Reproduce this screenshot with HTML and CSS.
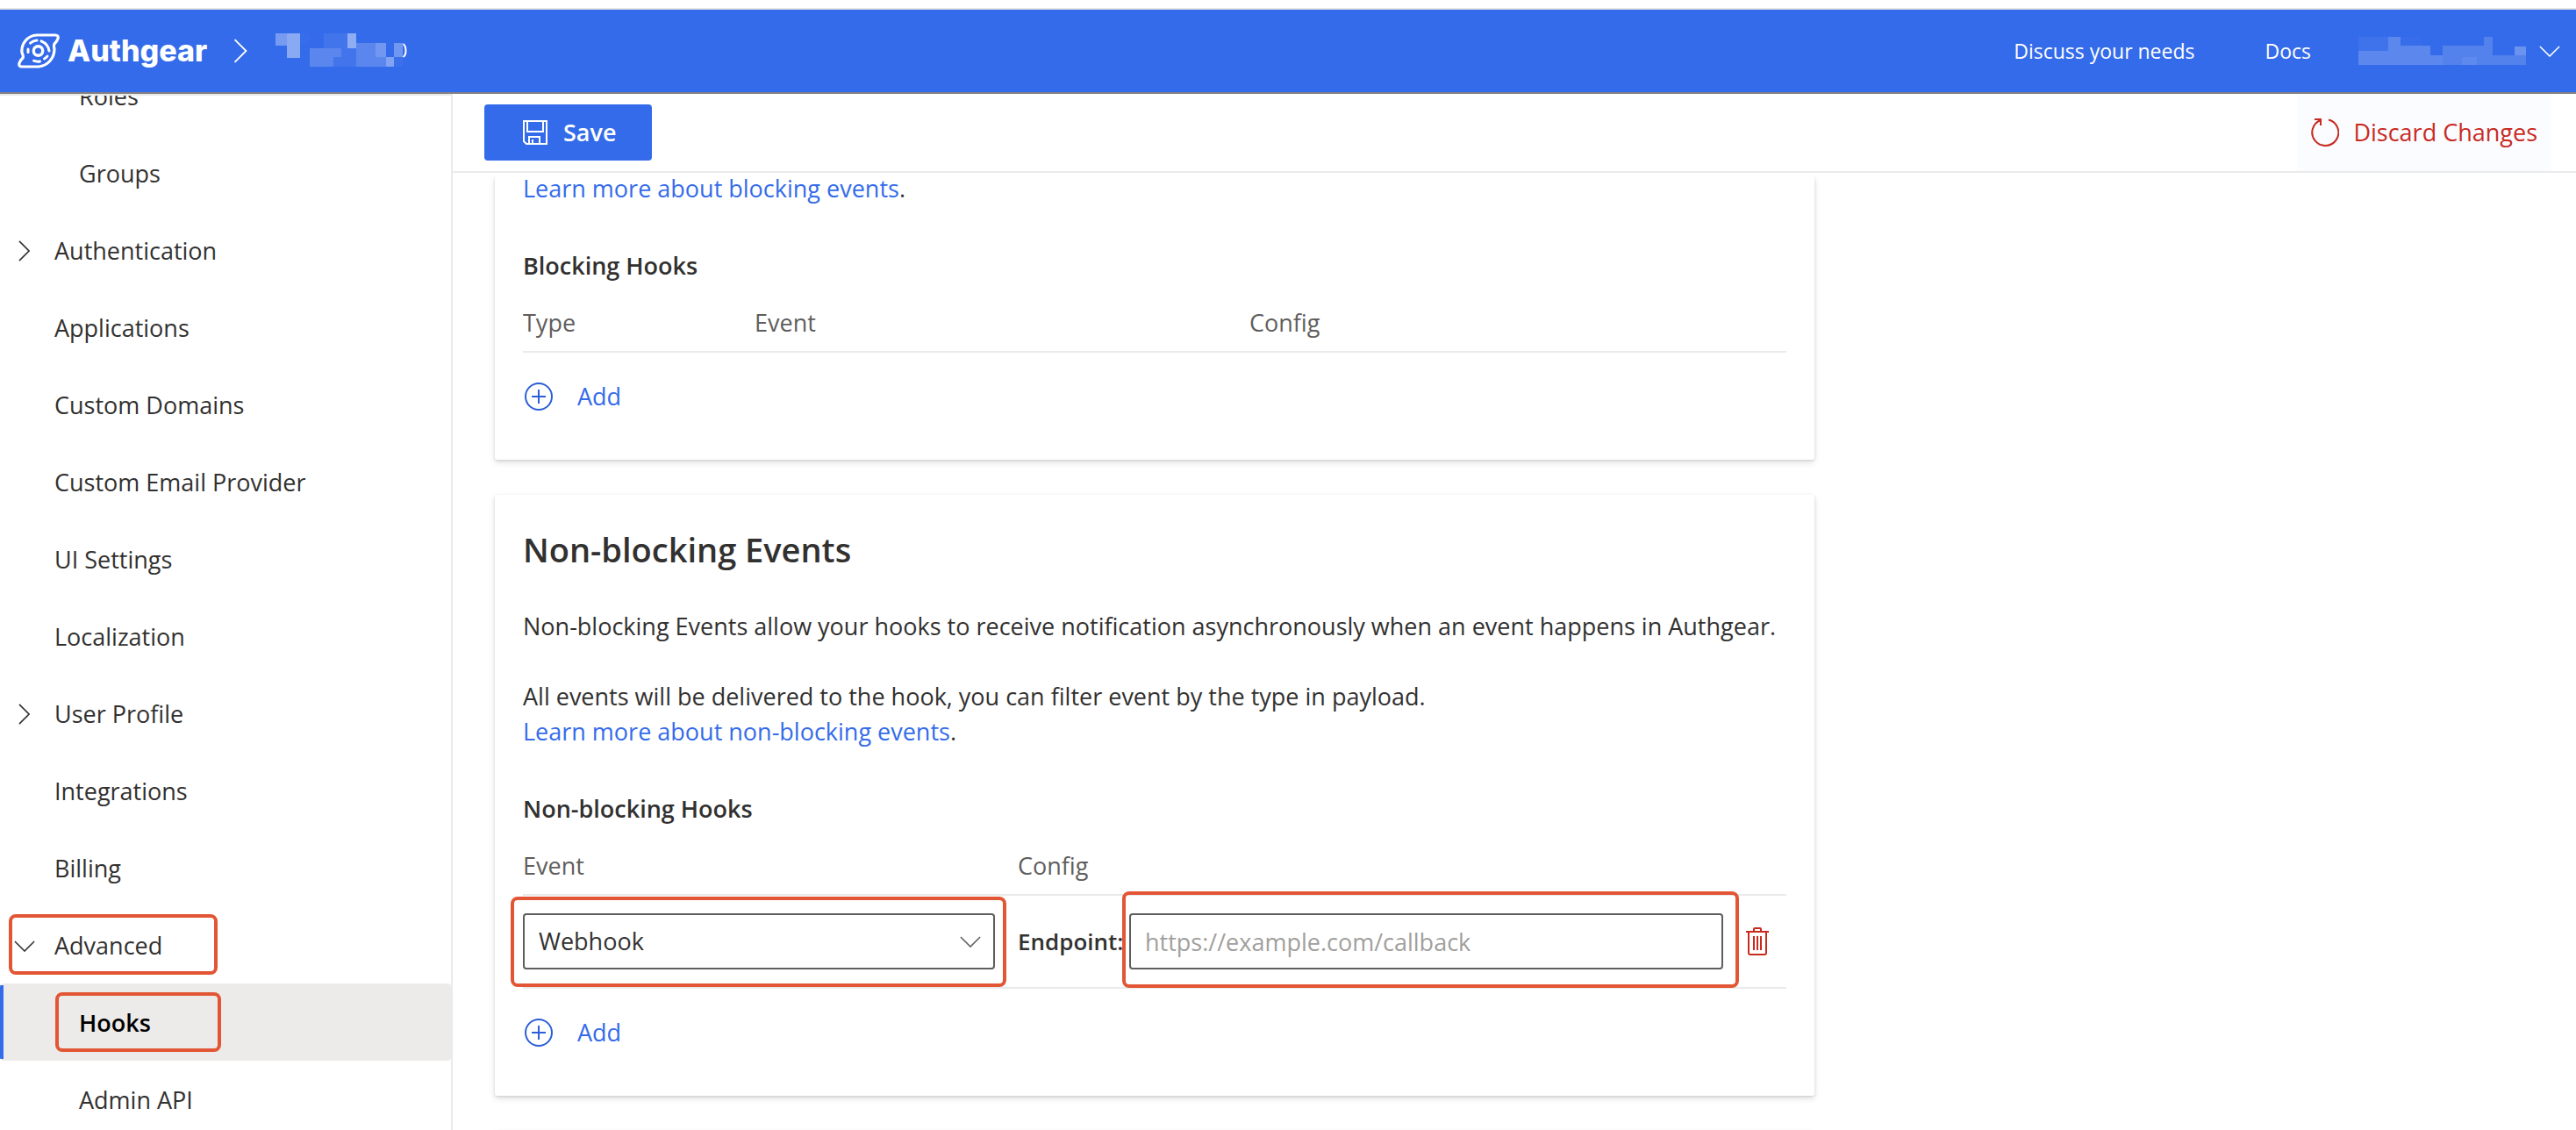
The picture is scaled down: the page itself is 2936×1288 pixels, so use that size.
FILE: index.html
```
<!DOCTYPE html>
<html lang="en">
<head>
<meta charset="utf-8">
<title>Hooks - Authgear</title>
<link rel="stylesheet" href="styles.css">
</head>
<body>
<svg class="defs" aria-hidden="true">
  <symbol id="chevron-right" viewBox="0 0 14 26"><path d="M1 1L13 13L1 25" fill="none" stroke="currentColor" stroke-width="1.700"/></symbol>
  <symbol id="chevron-down" viewBox="0 0 26 14"><path d="M1 1L13 13L25 1" fill="none" stroke="currentColor" stroke-width="1.700"/></symbol>
  <symbol id="circle-plus" viewBox="0 0 32 32"><g fill="none" stroke="currentColor" stroke-width="2"><circle cx="16" cy="16" r="15"/><path d="M16 8V24M8 16H24"/></g></symbol>
</svg>

<header class="topbar">
  <a class="logo" href="#">
    <svg class="logo-mark" viewBox="0 0 48 40" aria-hidden="true" fill="none" stroke="#fff" stroke-linecap="round" stroke-linejoin="round">
      <path stroke-width="3.2" d="M22 2H43Q47 2 46 6Q45 9 42 12Q41 14 42 18A20 20 0 0 1 24 38H5Q1 38 2 34Q3 31 6 28Q7 26 5 22A18 18 0 0 1 22 2Z"/>
      <circle cx="23.500" cy="20" r="5.200" stroke-width="3.400"/>
      <g stroke-width="3"><path d="M14.600 11.200Q18 8.200 22 8"/><path d="M27 8.800Q35 12 36 20"/><path d="M12 18V21.500"/><path d="M18.500 31.200Q22 32.600 25.500 32"/><path d="M30.500 29Q33 27.500 34 26"/></g>
    </svg>
    <span class="logo-text">Authgear</span>
  </a>
  <svg class="crumb-chevron" aria-hidden="true"><use href="#chevron-right"/></svg>
  <svg class="project" viewBox="0 0 150 40" aria-hidden="true" fill="#fff" shape-rendering="crispEdges">
    <path opacity=".33" d="M0 0h13v14H0z"/><path opacity=".42" d="M13 0h15v28H13z"/><path opacity=".02" d="M28 0h11v12H28z"/>
    <path opacity=".07" d="M55 0h27v17H55zM75 17h17v21H66V27h9z"/><path opacity=".45" d="M82 0h10v17H82z"/>
    <path opacity=".19" d="M39 17h36v10h-9v11H39zM92 11h22v16h12v11H92z"/><path opacity=".3" d="M114 11h12v16h-12zM135 11h10v16h-10z"/>
    <path opacity=".38" d="M126 27h9v11h-9z"/><path opacity=".04" d="M135 27h10v11h-10z"/>
    <path d="M145.500 12Q148.500 14 148.500 20Q148.500 25 145.500 27" fill="none" stroke="#fff" stroke-width="2" shape-rendering="auto"/>
  </svg>
  <nav class="top-links">
    <a href="#">Discuss your needs</a>
    <a href="#">Docs</a>
    <button class="account" type="button" aria-label="Account menu">
      <svg class="account-name" viewBox="0 0 191 32" aria-hidden="true" fill="#fff" shape-rendering="crispEdges">
        <path opacity=".06" d="M0 0h34v16H0z"/><path opacity=".02" d="M48 0h24v10H48z"/>
        <path opacity=".2" d="M0 16h34V0h14v10h34v11h14v11H0z"/>
        <path opacity=".16" d="M96 10h47V0h10v21h38v11H96z"/><path opacity=".06" d="M118 23h17v9h-17z"/>
        <path opacity=".27" d="M178 11h13v10h-13z"/>
      </svg>
      <svg class="chevron-down" aria-hidden="true"><use href="#chevron-down"/></svg>
    </button>
  </nav>
</header>

<div class="shell">
  <aside class="sidebar">
    <ul class="nav">
      <li><a class="nav-item child" href="#">Roles</a></li>
      <li><a class="nav-item child" href="#">Groups</a></li>
      <li><a class="nav-item" href="#"><svg class="nav-right" aria-hidden="true"><use href="#chevron-right"/></svg>Authentication</a></li>
      <li><a class="nav-item" href="#">Applications</a></li>
      <li><a class="nav-item" href="#">Custom Domains</a></li>
      <li><a class="nav-item" href="#">Custom Email Provider</a></li>
      <li><a class="nav-item" href="#">UI Settings</a></li>
      <li><a class="nav-item" href="#">Localization</a></li>
      <li><a class="nav-item" href="#"><svg class="nav-right" aria-hidden="true"><use href="#chevron-right"/></svg>User Profile</a></li>
      <li><a class="nav-item" href="#">Integrations</a></li>
      <li><a class="nav-item" href="#">Billing</a></li>
      <li><a class="nav-item" href="#"><svg class="nav-down" aria-hidden="true"><use href="#chevron-down"/></svg>Advanced<span class="mark mark-advanced"></span></a></li>
      <li><a class="nav-item child selected" href="#" aria-current="page">Hooks<span class="mark mark-hooks"></span></a></li>
      <li><a class="nav-item child" href="#">Admin API</a></li>
    </ul>
  </aside>

  <main class="main">
    <div class="commands">
      <button class="save" type="button">
        <svg class="save-icon" viewBox="0 0 28 28" aria-hidden="true" fill="none" stroke="currentColor" stroke-width="2"><path d="M1 1H27V27H4L1 24Z"/><path d="M5 1V13H23V1"/><path d="M7 27V19H19V27M11 27V22"/></svg>
        Save
      </button>
      <button class="discard" type="button">
        <svg class="discard-icon" viewBox="0 0 32 32" aria-hidden="true" fill="none" stroke="currentColor" stroke-width="2"><path d="M20 1.500A15 15 0 1 1 11 2"/><path d="M4 1H11V8"/></svg>
        Discard Changes
      </button>
    </div>

    <div class="content">
      <section class="card scrolled">
        <p><a href="#">Learn more about blocking events</a>.</p>
        <h3>Blocking Hooks</h3>
        <table>
          <colgroup><col class="col-type"><col class="col-event"><col></colgroup>
          <thead><tr><th>Type</th><th>Event</th><th>Config</th></tr></thead>
        </table>
        <button class="add" type="button"><svg class="add-icon" aria-hidden="true"><use href="#circle-plus"/></svg>Add</button>
      </section>

      <section class="card">
        <h2>Non-blocking Events</h2>
        <p>Non-blocking Events allow your hooks to receive notification asynchronously when an event happens in Authgear.</p>
        <p>All events will be delivered to the hook, you can filter event by the type in payload.<br><a href="#">Learn more about non-blocking events</a>.</p>
        <h3>Non-blocking Hooks</h3>
        <table>
          <colgroup><col class="col-event"><col><col class="col-action"></colgroup>
          <thead><tr><th>Event</th><th>Config</th><th></th></tr></thead>
          <tbody>
            <tr>
              <td>
                <div class="picker">
                  <select aria-label="Event"><option>Webhook</option></select>
                  <svg class="picker-chevron" aria-hidden="true"><use href="#chevron-down"/></svg>
                  <span class="mark mark-picker"></span>
                </div>
              </td>
              <td>
                <div class="endpoint">
                  <label for="endpoint">Endpoint:</label>
                  <div class="field"><input id="endpoint" type="text" placeholder="https://example.com/callback"><span class="mark mark-field"></span></div>
                </div>
              </td>
              <td>
                <button class="delete" type="button" aria-label="Delete">
                  <svg class="trash" viewBox="0 0 26 32" aria-hidden="true" fill="none" stroke="currentColor" stroke-width="2"><path d="M0 5H26M9 5V2Q9 1 10 1H16Q17 1 17 2V5M3 5V29Q3 31 5 31H21Q23 31 23 29V5"/><path d="M9 10V26M13 10V26M17 10V26"/></svg>
                </button>
              </td>
            </tr>
          </tbody>
        </table>
        <button class="add" type="button"><svg class="add-icon" aria-hidden="true"><use href="#circle-plus"/></svg>Add</button>
      </section>

      <section class="card"></section>
    </div>
  </main>
</div>
</body>
</html>
```
FILE: styles.css
```
:root {
  --blue: #346bea;
  --red: #c92a1f;
  --mark: #e25635;
  --line: #eaeaea;
  --text: #323130;
}

* { box-sizing: border-box; }

body {
  margin: 0;
  height: 100vh;
  padding-top: 9px;
  display: flex;
  flex-direction: column;
  overflow: hidden;
  background: #fff;
  color: var(--text);
  font: 27px/40px "Open Sans", "Noto Sans", sans-serif;
}

a { color: var(--blue); text-decoration: none; }

button, select, input { font: inherit; color: inherit; margin: 0; }

button {
  display: flex;
  align-items: center;
  border: 0;
  padding: 0;
  background: none;
  cursor: pointer;
}

.defs { display: none; }

/* Top bar */
.topbar {
  flex: none;
  display: flex;
  align-items: center;
  height: 98px;
  padding: 0 18px 0 20px;
  border-top: 2px solid #e5e5e5;
  border-bottom: 2px solid #808080;
  background: var(--blue);
  color: #fff;
}

.topbar a { color: #fff; }

.logo { display: flex; align-items: center; gap: 9px; }
.logo-mark { width: 48px; height: 40px; }
.logo-text { font: 800 34px/40px Inter, sans-serif; }
.crumb-chevron { width: 16px; height: 28px; margin-left: 30px; }
.project { width: 150px; height: 40px; margin-left: 32px; }

.top-links {
  display: flex;
  align-items: center;
  gap: 80px;
  margin-left: auto;
  font-size: 23px;
}

.account { gap: 15px; margin-left: -26px; }
.account-name { width: 191px; height: 32px; }
.chevron-down { width: 24px; height: 13px; }

/* Shell */
.shell { flex: 1; min-height: 0; display: flex; }

.sidebar {
  flex: none;
  width: 516px;
  border-top: 2px solid var(--line);
  border-right: 2px solid var(--line);
  overflow: hidden;
}

.nav { list-style: none; margin: -44px 0 0; padding: 0; }

.nav-item {
  position: relative;
  display: flex;
  align-items: center;
  height: 88px;
  padding: 2px 0 0 62px;
  color: var(--text);
}

.nav-item.child { padding-left: 90px; }

.nav-item.selected {
  border-radius: 4px;
  background: linear-gradient(var(--blue), var(--blue)) 0 50% / 4px 84px no-repeat #edebe9;
  color: #000;
  font-weight: 600;
}

.nav-right { width: 13px; height: 24px; margin: 0 28px 0 -41px; }
.nav-down { width: 24px; height: 13px; margin: 0 22px 0 -46px; }

/* Tutorial highlight frames */
.mark {
  position: absolute;
  border: 4px solid var(--mark);
  border-radius: 8px;
  pointer-events: none;
}

.mark-advanced { inset: 9px auto 10px 10px; width: 238px; }
.mark-hooks { inset: 10px auto 10px 63px; width: 189px; }
.mark-picker { inset: -19px -13px -20px -14px; }
.mark-field { inset: -25px -18px -21px -8px; }

/* Main column */
.main { flex: 1; min-width: 0; display: flex; flex-direction: column; }

.commands {
  flex: none;
  display: flex;
  align-items: center;
  justify-content: space-between;
  height: 90px;
  padding: 0 28px 0 36px;
  border-bottom: 2px solid var(--line);
}

.save {
  gap: 18px;
  height: 64px;
  padding: 0 40px 0 44px;
  border-radius: 4px;
  background: var(--blue);
  color: #fff;
  font-weight: 600;
}

.save-icon { width: 28px; height: 28px; }

.discard {
  gap: 16px;
  height: 88px;
  padding: 0 16px;
  background: #fafcff;
  color: var(--red);
}

.discard-icon { width: 32px; height: 32px; }

.content {
  flex: 1;
  min-height: 0;
  display: flex;
  flex-direction: column;
  gap: 40px;
  margin-top: 4px;
  padding: 0 48px;
  overflow: hidden;
}

.card {
  flex: none;
  max-width: 1504px;
  padding: 36px 32px 32px;
  border-radius: 2px;
  background: #fff;
  box-shadow: 0 3px 7px rgba(0, 0, 0, .13), 0 1px 3px rgba(0, 0, 0, .11);
}

.card.scrolled { padding-top: 0; }
.card.scrolled p { line-height: 28px; margin-bottom: 54px; }

h2, h3, p { margin: 0; }
h2 { font-size: 38px; line-height: 52px; font-weight: 600; }
h3 { margin: 48px 0 12px; font-size: 27px; font-weight: 600; }
p + p { margin-top: 40px; }
h2 + p { margin-top: 42px; }

/* Hook tables */
table { width: 100%; table-layout: fixed; border-collapse: collapse; }
.col-type { width: 264px; }
.col-event { width: 564px; }
.col-action { width: 72px; }

th {
  height: 66px;
  padding: 0;
  border-bottom: 2px solid var(--line);
  color: #605e5c;
  font-weight: 400;
  text-align: left;
}

td { padding: 20px 0; border-bottom: 2px solid var(--line); }

select, input {
  display: block;
  width: 100%;
  height: 64px;
  padding: 0 16px;
  border: 2px solid #605e5c;
  border-radius: 4px;
  background: #fff;
}

select { appearance: none; }
input::placeholder { color: #a19f9d; opacity: 1; }

.picker { position: relative; margin-right: 26px; }
.picker-chevron { position: absolute; top: 26px; right: 16px; width: 24px; height: 13px; color: #605e5c; }

.endpoint { display: flex; align-items: center; }
.endpoint label { flex: none; width: 127px; font-size: 26px; font-weight: 600; }
.field { position: relative; flex: 1; }

.delete { margin-left: auto; padding: 0 20px; color: var(--red); }
.trash { width: 26px; height: 32px; }

.add { gap: 28px; height: 80px; margin-top: 10px; padding: 0 2px; color: var(--blue); }
.add-icon { width: 32px; height: 32px; color: #2b5fd6; }
```
